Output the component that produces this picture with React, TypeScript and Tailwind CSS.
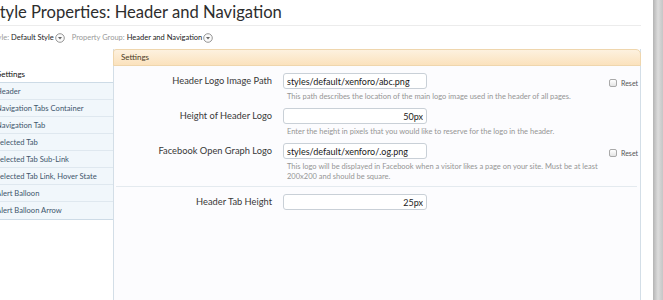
import React from "react";

const navItems = [
  "Header",
  "Navigation Tabs Container",
  "Navigation Tab",
  "Selected Tab",
  "Selected Tab Sub-Link",
  "Selected Tab Link, Hover State",
  "Alert Balloon",
  "Alert Balloon Arrow",
];

function MenuIcon() {
  return (
    <svg width="10" height="10" viewBox="0 0 10 10" className="ml-[1px] shrink-0">
      <circle cx="5" cy="5" r="4.3" fill="#fafafa" stroke="#8a8a8a" strokeWidth="0.9" />
      <path d="M3 4 L7 4 L5 6.4 Z" fill="#666" />
    </svg>
  );
}

function Reset() {
  return (
    <div className="ml-[8px] mt-[6px] flex self-start items-end">
      <div className="h-[8px] w-[8px] rounded-[2px] border border-[#a9a9a9] bg-gradient-to-b from-white to-[#e4e4e4]" />
      <span className="ml-[4px] text-[7px] leading-[7px] text-[#555]">Reset</span>
    </div>
  );
}

type RowProps = {
  label: string;
  value: string;
  right?: boolean;
  hint?: string;
  reset?: boolean;
  height: string;
};

function Row({ label, value, right, hint, reset, height }: RowProps) {
  return (
    <div className={`flex items-start ${height}`}>
      <div className="w-[158px] shrink-0 text-right text-[9.3px] leading-[16px] text-[#383838]">{label}</div>
      <div className="ml-[11px] w-[318px] shrink-0">
        <input
          readOnly
          value={value}
          className={`block h-[16px] w-[144px] rounded-[3px] border border-[#c9d0d7] bg-white px-[3px] text-[9px] leading-[14px] text-[#1a1a1a] outline-none ${right ? "text-right" : ""}`}
        />
        {hint && (
          <p className="mt-[3px] pl-[4px] text-[7.5px] leading-[9.5px] text-[#959595]">{hint}</p>
        )}
      </div>
      {reset && <Reset />}
    </div>
  );
}

export default function App() {
  return (
    <div className="flex h-[300px] w-[663px] overflow-hidden bg-white font-['Lato',sans-serif]">
      <div className="w-[653px] shrink-0 overflow-hidden">
        <div className="-ml-[9px] w-[650px]">
          {/* Title */}
          <div className="h-[26px] border-b border-[#ececec] pt-[1px]">
            <h1 className="text-[16.6px] leading-[22px] text-[#2d2d2d]">Style Properties: Header and Navigation</h1>
          </div>

          {/* Breadcrumb */}
          <div className="flex h-[23px] items-center text-[7.5px]">
            <span className="text-[#9a9a9a]">Style:</span>
            <span className="ml-[2px] text-[#222]">Default Style</span>
            <MenuIcon />
            <span className="ml-[7px] text-[#9a9a9a]">Property Group:</span>
            <span className="ml-[2px] text-[#222]">Header and Navigation</span>
            <MenuIcon />
          </div>

          <div className="flex h-[251px]">
            {/* Sidebar */}
            <div className="w-[122px] shrink-0 pt-[17px]">
              <div className="h-[16px] pl-[6px] text-[8px] leading-[16px] text-[#111]">Settings</div>
              <ul className="border-y border-[#cddbe6]">
                {navItems.map((item, i) => (
                  <li
                    key={item}
                    className={`h-[17px] bg-[#f1f7fb] pl-[5px] text-[7.6px] leading-[17px] text-[#3e566c] ${i < navItems.length - 1 ? "border-b border-[#dfe8ef]" : ""}`}
                  >
                    {item}
                  </li>
                ))}
              </ul>
            </div>

            {/* Settings panel */}
            <div className="flex-1 border-x border-[#d3dee7] bg-[#fcfcfe]">
              <div className="-mx-px h-[17px] rounded-tl-[3px] rounded-tr-[5px] border border-[#efd6ad] bg-gradient-to-b from-[#fdf1df] to-[#fbe2bd] pl-[7px] text-[8px] leading-[15px] text-[#4b3b27]">
                Settings
              </div>
              <div className="pt-[7px]">
                <Row
                  height="h-[35px]"
                  label="Header Logo Image Path"
                  value="styles/default/xenforo/abc.png"
                  hint="This path describes the location of the main logo image used in the header of all pages."
                  reset
                />
                <Row
                  height="h-[35px]"
                  label="Height of Header Logo"
                  value="50px"
                  right
                  hint="Enter the height in pixels that you would like to reserve for the logo in the header."
                />
                <Row
                  height="h-[43px]"
                  label="Facebook Open Graph Logo"
                  value="styles/default/xenforo/.og.png"
                  hint="This logo will be displayed in Facebook when a visitor likes a page on your site. Must be at least 200x200 and should be square."
                  reset
                />
                <div className="ml-[2px] mr-[3px] h-px bg-[#e4eaef]" />
                <div className="pt-[7px]">
                  <Row height="h-[35px]" label="Header Tab Height" value="25px" right />
                </div>
              </div>
            </div>
          </div>
        </div>
      </div>
      <div className="w-[10px] shrink-0 bg-gradient-to-r from-[#b4b4b4] via-[#dcdcdc] to-[#c6c6c6]" />
    </div>
  );
}
